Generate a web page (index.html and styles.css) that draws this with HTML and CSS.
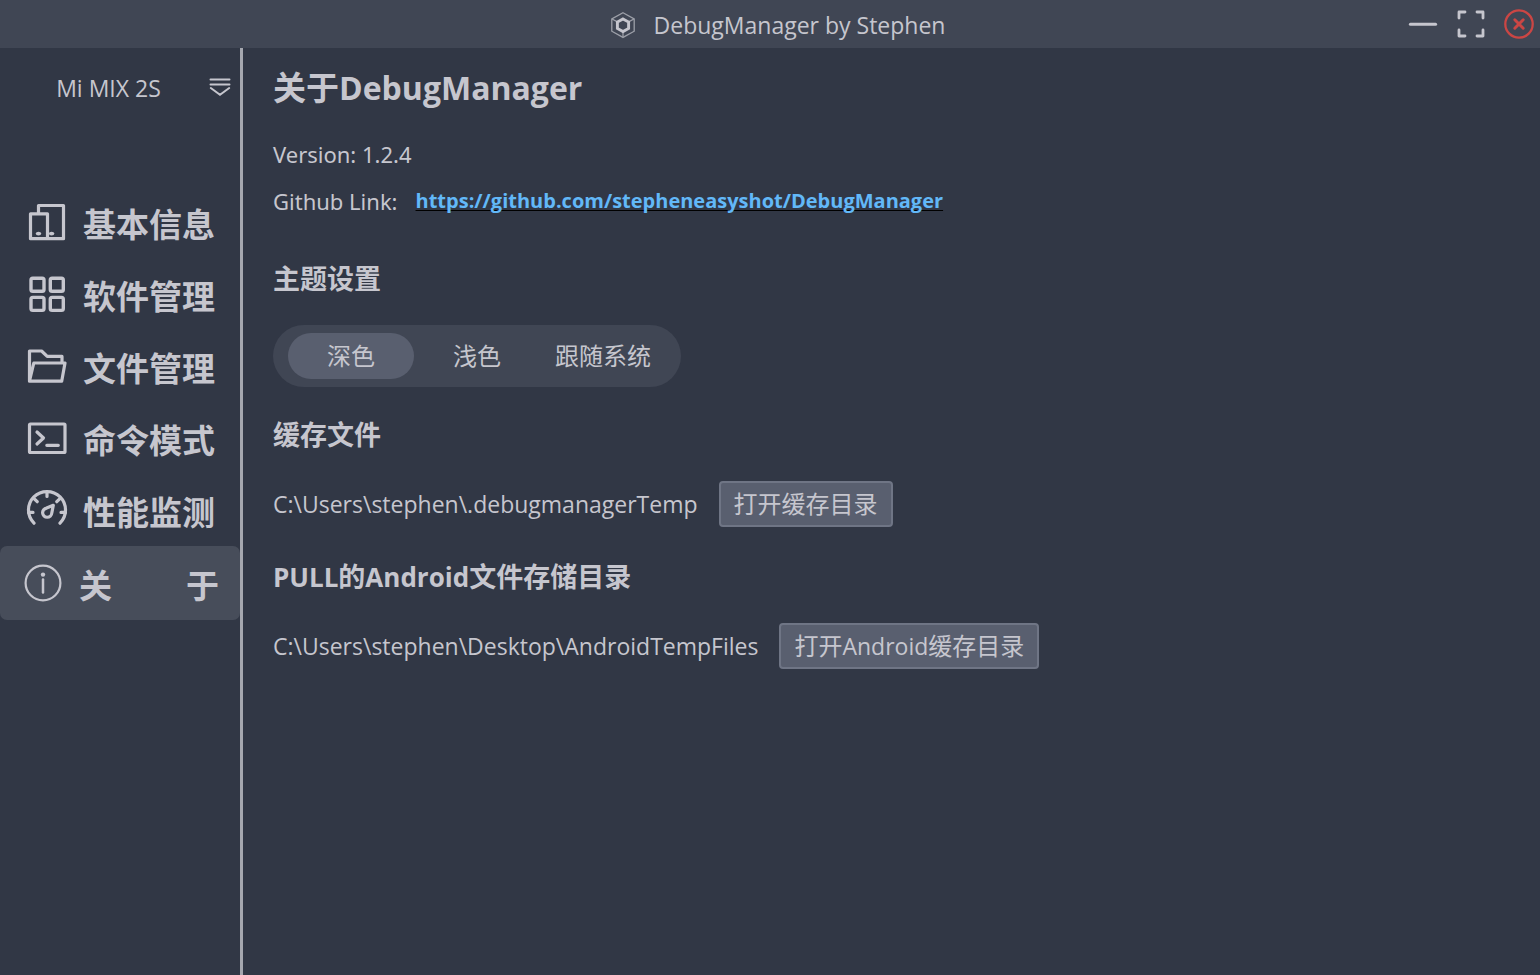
FILE: index.html
```html
<!DOCTYPE html>
<html lang="zh-CN">
<head>
<meta charset="utf-8">
<meta name="viewport" content="width=device-width, initial-scale=1">
<title>DebugManager by Stephen</title>
<link rel="stylesheet" href="styles.css">
</head>
<body>
<div class="app">
  <header class="titlebar">
    <div class="brand">
      <svg class="brand-icon" width="26" height="28" viewBox="0 0 26 28" aria-hidden="true">
        <path d="M13 1.8 24.2 8v12.2L13 26.4 1.8 20.2V8z" fill="none" stroke="#9da0a9" stroke-width="1.3"/>
        <path d="M2 8l5 2.6M24 8l-5 2.6M13 20v6" fill="none" stroke="#9da0a9" stroke-width="1.3"/>
        <path d="M13 8l5.6 3v6.4L13 20.6l-5.6-3.2V11z" fill="none" stroke="#c6c6ce" stroke-width="2.9"/>
      </svg>
      <span>DebugManager by Stephen</span>
    </div>
    <div class="window-controls">
      <button type="button" class="icon-button" aria-label="最小化">
        <svg width="30" height="30" viewBox="0 0 30 30"><path d="M2.4 15.2h25.2" stroke="#c6c6ce" stroke-width="3" stroke-linecap="round"/></svg>
      </button>
      <button type="button" class="icon-button" aria-label="最大化">
        <svg width="30" height="30" viewBox="0 0 30 30"><path d="M3 9V3h6M21 3h6v6M27 21v6h-6M9 27H3v-6" fill="none" stroke="#c6c6ce" stroke-width="2.8" stroke-linecap="round" stroke-linejoin="round"/></svg>
      </button>
      <button type="button" class="icon-button" aria-label="关闭">
        <svg width="30" height="30" viewBox="0 0 30 30"><g fill="none" stroke="#cb4644"><circle cx="15" cy="15" r="13.7" stroke-width="2.3"/><path d="M10.8 10.8l8.4 8.4M19.2 10.8l-8.4 8.4" stroke-width="3" stroke-linecap="round"/></g></svg>
      </button>
    </div>
  </header>

  <div class="body">
    <aside class="sidebar">
      <button type="button" class="device">
        <span class="device-name">Mi MIX 2S</span>
        <svg width="22" height="20" viewBox="0 0 22 20" aria-hidden="true"><path d="M1.5 1.5h19M1.5 6.5h19M1.8 10l9.2 6.7 9.2-6.7" fill="none" stroke="#c6c6ce" stroke-width="2" stroke-linecap="round"/></svg>
      </button>
      <nav class="nav">
        <a class="nav-item" href="#info">
          <svg width="44" height="44" viewBox="0 0 44 44" aria-hidden="true"><g fill="none" stroke="#c6c6ce" stroke-width="3.2" stroke-linejoin="round"><path d="M13.5 13V5.5h25v33.2h-33V13.8h17v24.9"/></g><g fill="#c6c6ce"><ellipse cx="13.5" cy="33.6" rx="2.7" ry="1.9"/><ellipse cx="26.6" cy="33.6" rx="2.7" ry="1.9"/></g></svg>
          <span class="nav-label">基本信息</span>
        </a>
        <a class="nav-item" href="#apps">
          <svg width="44" height="44" viewBox="0 0 44 44" aria-hidden="true"><g fill="none" stroke="#c6c6ce" stroke-width="3.4"><rect x="6" y="6.3" width="13" height="13" rx="1.8"/><rect x="25.3" y="6.3" width="13" height="13" rx="1.8"/><rect x="6" y="25.4" width="13" height="13" rx="1.8"/><rect x="25.3" y="25.4" width="13" height="13" rx="1.8"/></g></svg>
          <span class="nav-label">软件管理</span>
        </a>
        <a class="nav-item" href="#files">
          <svg width="44" height="44" viewBox="0 0 44 44" aria-hidden="true"><path d="M37 18.8v-6.4H22.2L16.6 7H4.5v30.2h32.2L40 19H8.8L4.5 37" fill="none" stroke="#c6c6ce" stroke-width="3.2" stroke-linejoin="round"/></svg>
          <span class="nav-label">文件管理</span>
        </a>
        <a class="nav-item" href="#command">
          <svg width="44" height="44" viewBox="0 0 44 44" aria-hidden="true"><g fill="none" stroke="#c6c6ce" stroke-width="3.2" stroke-linecap="round" stroke-linejoin="round"><rect x="4.5" y="8" width="35.5" height="28.5" rx="1"/><path d="M12 16l6.5 6-6.5 6M21.8 29.3h11.5"/></g></svg>
          <span class="nav-label">命令模式</span>
        </a>
        <a class="nav-item" href="#performance">
          <svg width="44" height="44" viewBox="0 0 44 44" aria-hidden="true"><g fill="none" stroke="#c6c6ce" stroke-width="3.2" stroke-linecap="round" stroke-linejoin="round"><path d="M9 35.2a18.5 18.5 0 1 1 26 0"/><path d="M22 4v4.5M8.8 10.3l3.4 3.4M35.2 10.3l-3.4 3.4M3.5 24.4H8M36 24.4h4.5"/><path d="M28.3 17.3 26.8 25a4.6 4.6 0 1 1-5.2-4.9z"/></g></svg>
          <span class="nav-label">性能监测</span>
        </a>
        <a class="nav-item nav-item-active" href="#about" aria-current="page">
          <svg width="44" height="44" viewBox="0 0 44 44" aria-hidden="true"><circle cx="22" cy="22" r="17.4" fill="none" stroke="#c6c6ce" stroke-width="2.2"/><circle cx="22" cy="13.6" r="2.2" fill="#c6c6ce"/><path d="M22 18.5v13" stroke="#c6c6ce" stroke-width="2.5" stroke-linecap="round"/></svg>
          <span class="nav-label nav-spread"><span>关</span><span>于</span></span>
        </a>
      </nav>
    </aside>

    <main class="content">
      <h1 class="page-title">关于<span class="title-latin">DebugManager</span></h1>
      <p class="line version">Version: 1.2.4</p>
      <p class="line github">Github Link: <a class="link" href="https://github.com/stepheneasyshot/DebugManager">https://github.com/stepheneasyshot/DebugManager</a></p>

      <h2 class="section-title" id="theme-title">主题设置</h2>
      <div class="segmented" role="radiogroup" aria-labelledby="theme-title">
        <label class="segment"><input class="segment-input" type="radio" name="theme" checked><span class="segment-text">深色</span></label>
        <label class="segment"><input class="segment-input" type="radio" name="theme"><span class="segment-text">浅色</span></label>
        <label class="segment"><input class="segment-input" type="radio" name="theme"><span class="segment-text">跟随系统</span></label>
      </div>

      <h2 class="section-title">缓存文件</h2>
      <div class="path-row">
        <span>C:\Users\stephen\.debugmanagerTemp</span>
        <button type="button" class="button">打开缓存目录</button>
      </div>

      <h2 class="section-title"><span class="section-latin">PULL</span>的<span class="section-latin">Android</span>文件存储目录</h2>
      <div class="path-row">
        <span>C:\Users\stephen\Desktop\AndroidTempFiles</span>
        <button type="button" class="button">打开<span class="button-latin">Android</span>缓存目录</button>
      </div>
    </main>
  </div>
</div>
</body>
</html>
```
FILE: styles.css
```css
* {
  box-sizing: border-box;
}

body {
  margin: 0;
  background: #313745;
  color: #c6c6ce;
  font-family: "Open Sans", "Noto Sans CJK SC", sans-serif;
  font-size: 23px;
  line-height: 32px;
}

button {
  font: inherit;
  color: inherit;
}

.app {
  display: flex;
  flex-direction: column;
  min-height: 100vh;
}

.titlebar {
  display: grid;
  grid-template-columns: 1fr auto 1fr;
  align-items: center;
  height: 48px;
  background: #404654;
}

.brand {
  grid-column: 2;
  display: flex;
  align-items: center;
  gap: 18px;
  padding: 2px 0 0 15px;
}

.window-controls {
  display: flex;
  justify-content: flex-end;
  gap: 18px;
  padding-right: 6px;
}

.icon-button {
  display: flex;
  padding: 0;
  border: 0;
  background: none;
}

.body {
  display: flex;
  flex: 1;
}

.sidebar {
  flex: none;
  width: 243px;
  border-right: 3px solid #a5a7af;
}

.device {
  display: flex;
  align-items: center;
  width: 100%;
  height: 80px;
  padding: 0 9px 0 8px;
  border: 0;
  background: none;
}

.device-name {
  flex: 1;
}

.nav {
  display: flex;
  flex-direction: column;
  padding-top: 58px;
}

.nav-item {
  display: flex;
  align-items: center;
  gap: 14px;
  height: 72px;
  padding-left: 25px;
  color: inherit;
  font-size: 33px;
  font-weight: 700;
  line-height: 48px;
  text-decoration: none;
}

.nav-label {
  padding-top: 5px;
}

.nav-item-active {
  height: 74px;
  padding-left: 21px;
  border-radius: 7px;
  background: #474d5a;
}

.nav-spread {
  display: flex;
  flex: 1;
  justify-content: space-between;
  padding-right: 21px;
}

.content {
  flex: 1;
  padding: 16px 30px;
}

.page-title {
  margin: 0;
  font-size: 33px;
  line-height: 48px;
}

.title-latin {
  font-size: 32px;
}

.line {
  margin: 0;
  font-family: "Noto Sans", "Noto Sans CJK SC", sans-serif;
  font-size: 22px;
}

.version {
  margin-top: 26px;
}

.github {
  display: flex;
  gap: 18px;
  margin-top: 15px;
}

.link {
  color: #62b8f8;
  font-family: "Open Sans", sans-serif;
  font-size: 20px;
  font-weight: 700;
  text-decoration: underline #000 1px;
  text-decoration-skip-ink: none;
  text-underline-offset: 2px;
}

.section-title {
  margin: 30px 0 28px;
  font-size: 27px;
  line-height: 36px;
}

.section-latin {
  font-size: 26px;
}

.github + .section-title {
  margin-top: 44px;
}

.path-row + .section-title {
  margin-top: 32px;
}

.segmented {
  display: inline-grid;
  grid-template-columns: repeat(3, 126px);
  padding: 8px 15px;
  border-radius: 31px;
  background: #404654;
  font-size: 24px;
  vertical-align: top;
}

.segment-input {
  position: absolute;
  opacity: 0;
}

.segment-text {
  display: block;
  border-radius: 23px;
  line-height: 46px;
  text-align: center;
}

.segment-input:checked + .segment-text {
  background: #595f6f;
}

.path-row {
  display: flex;
  align-items: center;
  gap: 21px;
}

.button {
  padding: 5px 13px;
  border: 2px solid #6f7585;
  border-radius: 4px;
  background: #595f6f;
  font-size: 24px;
}

.button-latin {
  font-size: 23px;
}
```
